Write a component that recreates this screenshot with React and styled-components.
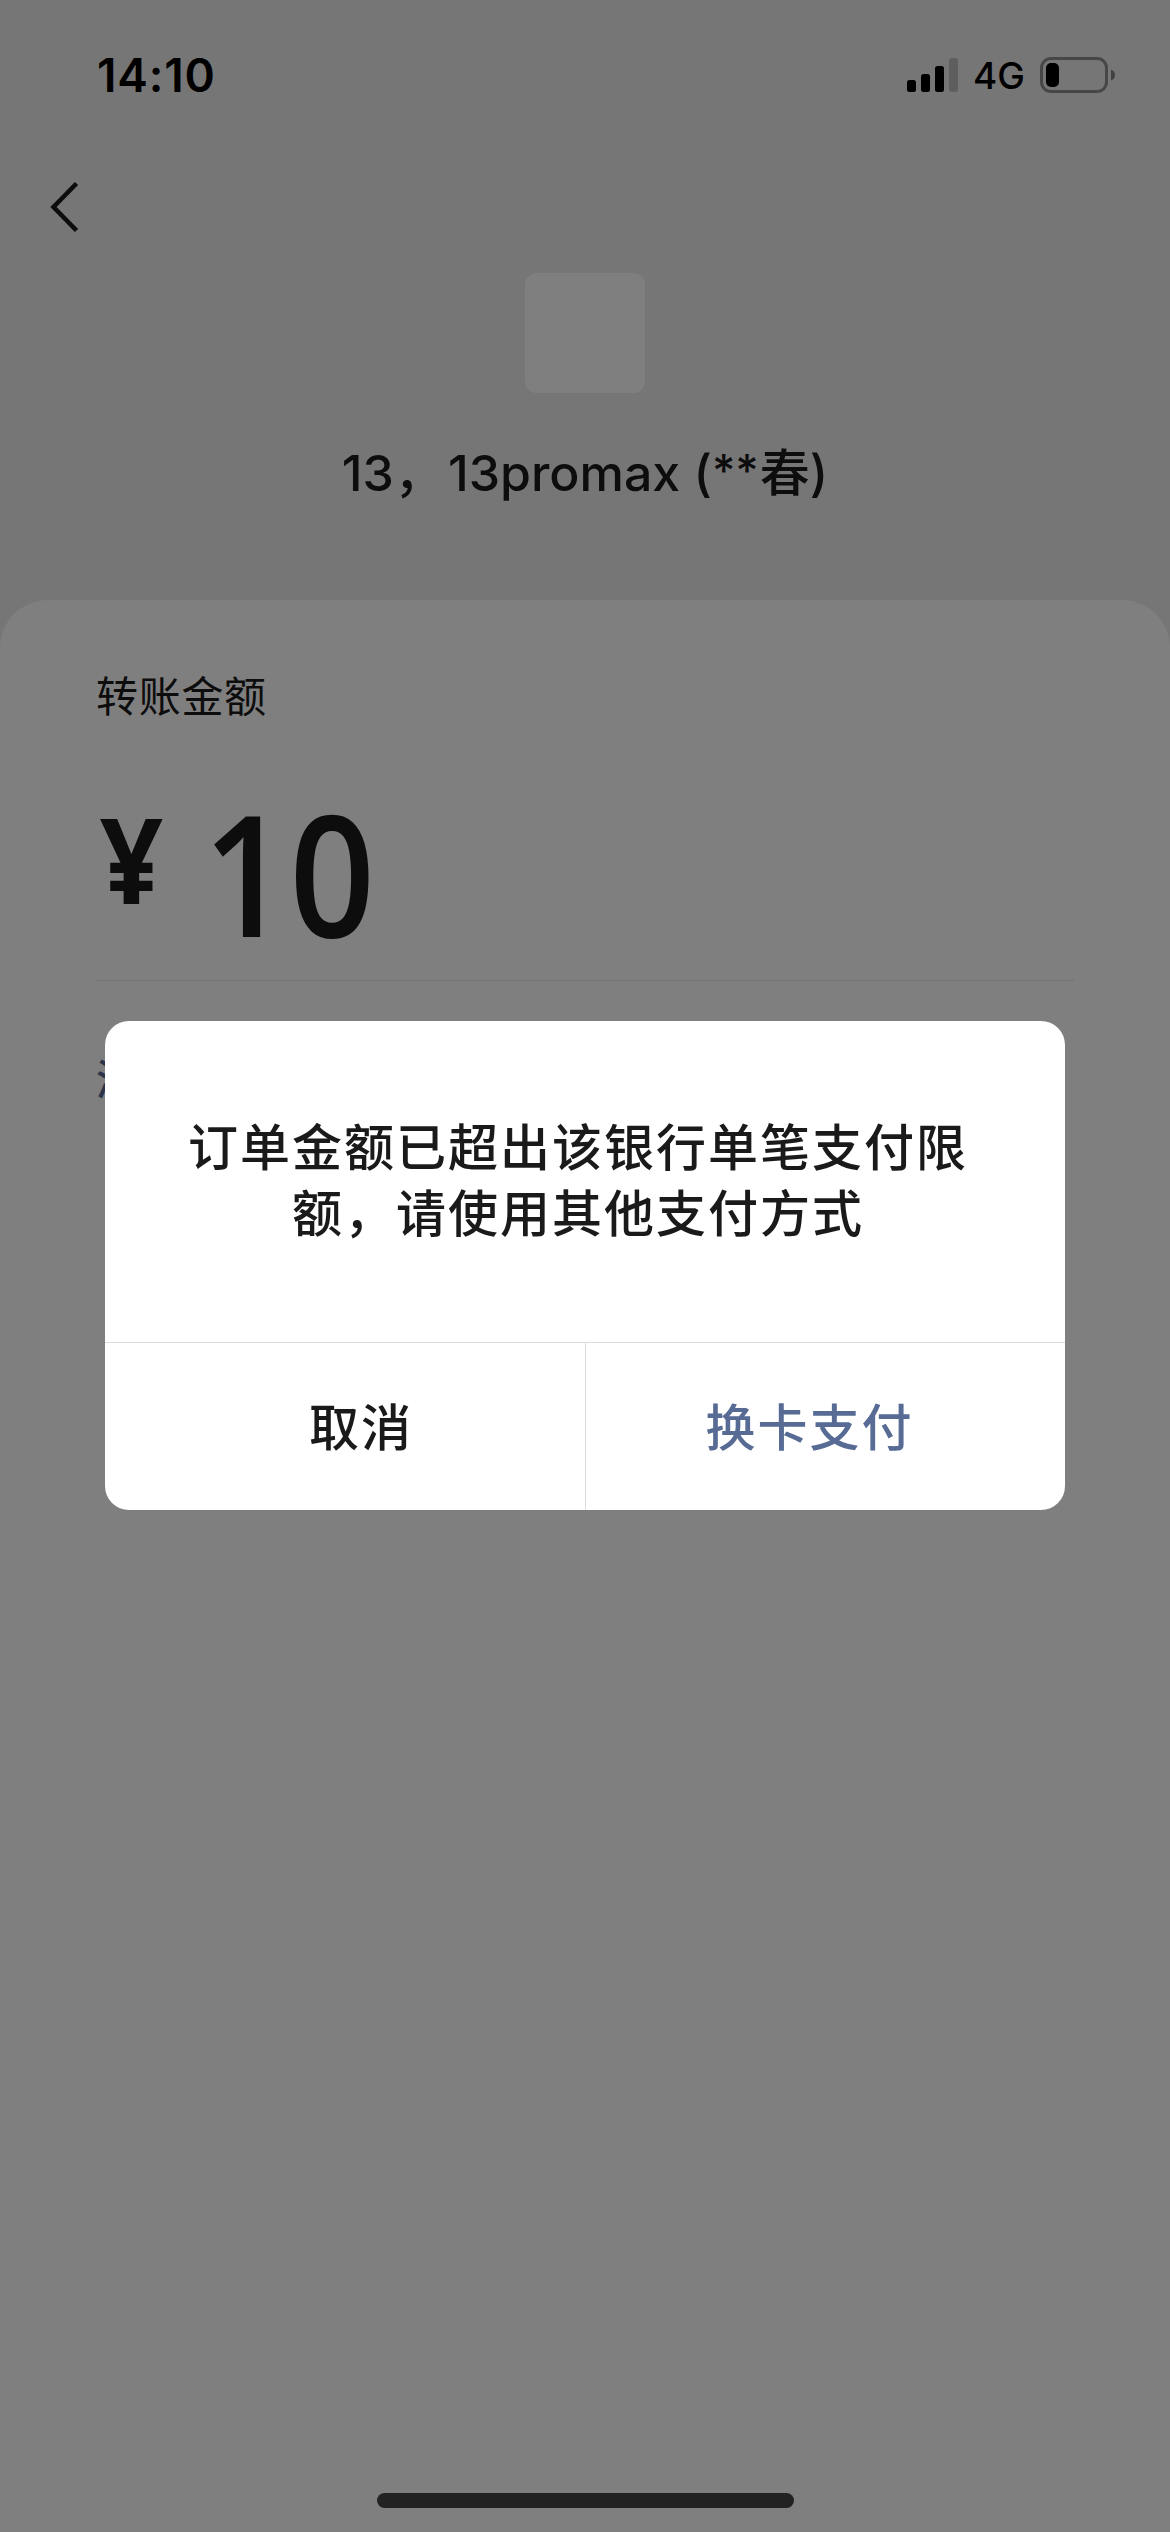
import React from "react";
import styled, { createGlobalStyle } from "styled-components";

const GlobalStyle = createGlobalStyle`
  * {
    box-sizing: border-box;
  }
  body {
    margin: 0;
    background: #ededed;
    font-family: Inter, "Noto Sans CJK SC", sans-serif;
    color: #1a1a1a;
  }
`;

const Screen = styled.div`
  position: relative;
  display: flex;
  flex-direction: column;
  width: 1170px;
  height: 2532px;
  overflow: hidden;
  background: #ededed;
`;

const StatusBar = styled.div`
  display: flex;
  align-items: center;
  justify-content: space-between;
  height: 150px;
  padding: 0 54px 0 97px;
  color: #000;
`;

const Time = styled.div`
  font-size: 46px;
  font-weight: 600;
  letter-spacing: 0.8px;
  line-height: 56px;
`;

const StatusIcons = styled.div`
  display: flex;
  align-items: center;
`;

const Network = styled.span`
  margin: 1px 15px 0 14px;
  font-size: 37px;
  font-weight: 450;
  line-height: 44px;
`;

const NavBar = styled.div`
  display: flex;
  align-items: center;
  height: 114px;
  padding-left: 50px;
`;

const Payee = styled.div`
  display: flex;
  flex-direction: column;
  align-items: center;
  height: 336px;
  padding-top: 9px;
`;

const Avatar = styled.div`
  width: 120px;
  height: 120px;
  border-radius: 12px;
  background: #fff;
`;

const PayeeName = styled.div`
  margin-top: 47px;
  font-size: 50px;
  font-weight: 500;
  line-height: 66px;
  white-space: nowrap;
`;

const Comma = styled.span`
  margin-right: 4px;
  font-family: "Noto Sans CJK SC", sans-serif;
  line-height: 0;
  vertical-align: -1px;
`;

const Stars = styled.span`
  margin-right: 1px;
  font-size: 45px;
  line-height: 0;
  vertical-align: 4px;
`;

const Card = styled.div`
  flex: 1;
  padding: 64px 96px 0 96px;
  border-radius: 48px 48px 0 0;
  background: #fff;
`;

const Label = styled.div`
  font-family: "Noto Sans CJK SC", sans-serif;
  font-size: 42px;
  font-weight: 400;
  letter-spacing: 0.7px;
  line-height: 60px;
`;

const AmountRow = styled.div`
  display: flex;
  align-items: flex-start;
  height: 257px;
  padding-top: 64px;
  border-bottom: 1px solid #e4e4e4;
  font-family: "Open Sans", "Noto Sans", sans-serif;
`;

const Currency = styled.span`
  width: 107px;
  padding: 12px 0 0 4px;
  font-size: 118px;
  font-weight: 700;
  line-height: 118px;
  transform: scaleX(0.94);
  transform-origin: left center;
`;

const Amount = styled.span`
  font-size: 168px;
  font-weight: 600;
  letter-spacing: 1px;
  line-height: 168px;
  transform: scaleX(0.89);
  transform-origin: left center;
`;

const NoteLink = styled.div`
  margin-top: 66px;
  font-family: "Noto Sans CJK SC", sans-serif;
  font-size: 42px;
  font-weight: 500;
  line-height: 60px;
  color: #576b95;
`;

const Mask = styled.div`
  position: absolute;
  inset: 0;
  display: flex;
  justify-content: center;
  align-items: flex-start;
  padding-top: 1021px;
  background: rgba(0, 0, 0, 0.5);
`;

const Dialog = styled.div`
  display: flex;
  flex-direction: column;
  width: 960px;
  height: 489px;
  border-radius: 24px;
  background: #fff;
  overflow: hidden;
  font-family: "Noto Sans CJK SC", sans-serif;
`;

const Message = styled.div`
  flex: 1;
  padding: 90px 14px 0 0;
  font-size: 50px;
  font-weight: 500;
  letter-spacing: 2px;
  line-height: 66px;
  text-align: center;
`;

const Actions = styled.div`
  display: grid;
  grid-template-columns: 1fr 1fr;
  height: 168px;
  border-top: 1px solid #dcdcdc;
`;

const Action = styled.button`
  margin: 0;
  padding: ${(props) => (props.$primary ? "0 32px 5px 0" : "0 0 5px 32px")};
  border: 0;
  border-left: ${(props) => (props.$primary ? "1px solid #dcdcdc" : "0")};
  background: none;
  color: ${(props) => (props.$primary ? "#576b95" : "#1a1a1a")};
  font-family: inherit;
  font-size: 50px;
  font-weight: 500;
  letter-spacing: 2px;
  line-height: 66px;
`;

const HomeIndicator = styled.div`
  position: absolute;
  left: 377px;
  bottom: 24px;
  width: 417px;
  height: 15px;
  border-radius: 8px;
  background: #222;
`;

const Signal = () => (
  <svg width="52" height="34" viewBox="0 0 52 34">
    <rect x="0" y="22" width="9" height="12" rx="2.5" />
    <rect x="14" y="16" width="9" height="18" rx="2.5" />
    <rect x="28" y="8" width="9" height="26" rx="2.5" />
    <rect x="42" y="0" width="9" height="34" rx="2.5" fillOpacity="0.2" />
  </svg>
);

const Battery = () => (
  <svg width="76" height="36" viewBox="0 0 76 36">
    <rect
      x="1.5"
      y="1.5"
      width="65"
      height="33"
      rx="9.5"
      fill="none"
      stroke="#000"
      strokeWidth="3"
      strokeOpacity="0.4"
    />
    <path d="M71 12.5 Q75 14 75 18 Q75 22 71 23.5 Z" fillOpacity="0.45" />
    <rect x="6" y="6" width="13" height="24" rx="5" />
  </svg>
);

const BackIcon = () => (
  <svg width="30" height="52" viewBox="0 0 30 52" fill="none">
    <path d="M26.5 2.5 L3.5 26 L26.5 49.5" stroke="#1a1a1a" strokeWidth="4.6" />
  </svg>
);

function App() {
  return (
    <>
      <GlobalStyle />
      <Screen>
        <StatusBar>
          <Time>14:10</Time>
          <StatusIcons>
            <Signal />
            <Network>4G</Network>
            <Battery />
          </StatusIcons>
        </StatusBar>
        <NavBar>
          <BackIcon />
        </NavBar>
        <Payee>
          <Avatar />
          <PayeeName>
            13<Comma>，</Comma>13promax (<Stars>**</Stars>春)
          </PayeeName>
        </Payee>
        <Card>
          <Label>转账金额</Label>
          <AmountRow>
            <Currency>¥</Currency>
            <Amount>10</Amount>
          </AmountRow>
          <NoteLink>添加转账说明</NoteLink>
        </Card>
        <Mask>
          <Dialog>
            <Message>
              订单金额已超出该银行单笔支付限
              <br />
              额，请使用其他支付方式
            </Message>
            <Actions>
              <Action>取消</Action>
              <Action $primary>换卡支付</Action>
            </Actions>
          </Dialog>
        </Mask>
        <HomeIndicator />
      </Screen>
    </>
  );
}

export default App;
